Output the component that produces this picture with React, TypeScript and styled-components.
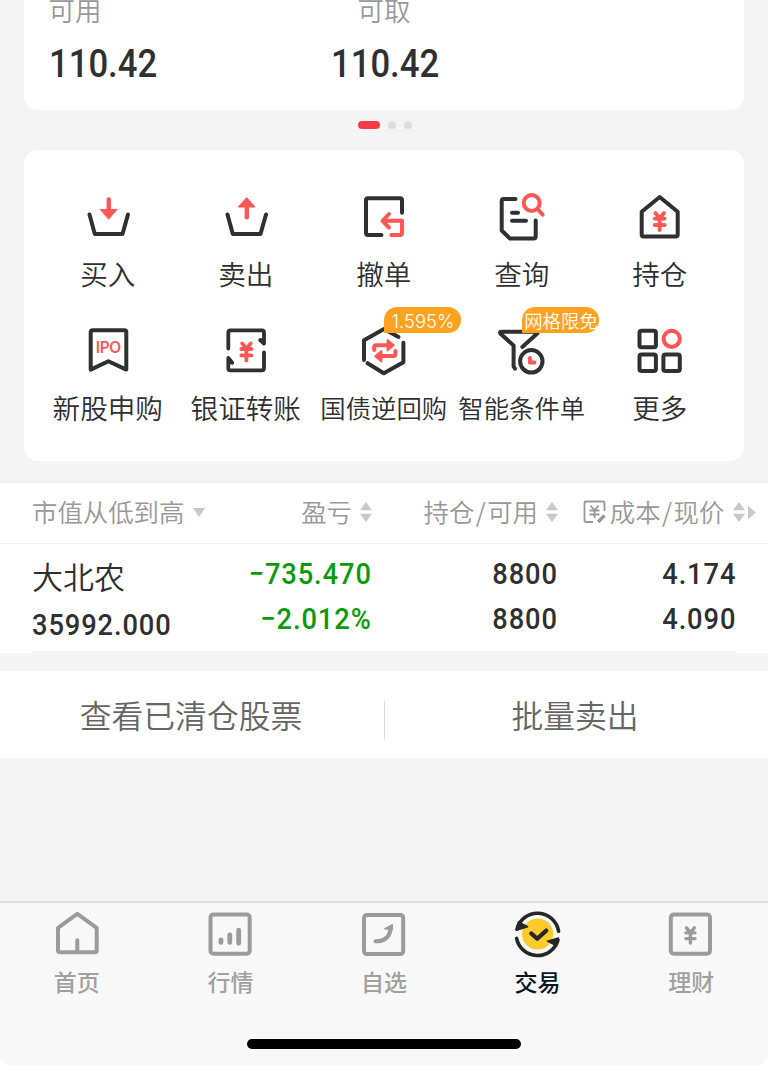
import React from 'react';
import styled, { createGlobalStyle } from 'styled-components';

const INK = '#2f3031';
const RED = '#ff5656';
const GREY = '#9b9b9b';

const GlobalStyle = createGlobalStyle`
  * { box-sizing: border-box; }
  body {
    margin: 0;
    background: #fff;
    font-family: 'Noto Sans CJK SC', sans-serif;
    font-weight: 350;
    color: ${INK};
  }
`;

const Screen = styled.div`
  width: 768px;
  height: 1065px;
  background: #f4f4f4;
  border-radius: 0 0 12px 12px;
  overflow: hidden;
  display: flex;
  flex-direction: column;
`;

const Num = styled.span<{ $size?: number; $color?: string; $spacing?: number; $right?: boolean }>`
  font-family: Roboto, sans-serif;
  font-weight: 500;
  font-size: ${p => p.$size ?? 30.3}px;
  line-height: 1;
  letter-spacing: ${p => p.$spacing ?? 1}px;
  margin-right: ${p => (p.$right ? 0 : -(p.$spacing ?? 1))}px;
  color: ${p => p.$color ?? INK};
  white-space: nowrap;
  transform: scaleX(0.9);
  transform-origin: ${p => (p.$right ? 'right' : 'left')} center;
`;

const Balance = styled.section`
  height: 110px;
  flex: none;
  margin: 0 24px;
  padding: 0 25px;
  background: #fff;
  border-radius: 0 0 14px 14px;
  display: flex;
`;

const BalanceItem = styled.div<{ $width: number; $indent: number }>`
  width: ${p => p.$width}px;
  display: flex;
  flex-direction: column;
  & > small {
    font-size: 26.5px;
    line-height: 40px;
    height: 40px;
    margin: -10px 0 15px ${p => p.$indent - 0.5}px;
    color: #999;
  }
`;

const Pager = styled.div`
  height: 40px;
  flex: none;
  display: flex;
  justify-content: center;
  padding: 11px 0 0 1px;
  gap: 8px;
`;

const Dot = styled.i<{ $active?: boolean }>`
  width: ${p => (p.$active ? 22 : 8)}px;
  height: 8px;
  border-radius: 4px;
  background: ${p => (p.$active ? '#f53b48' : '#dddddd')};
`;

const Actions = styled.section`
  height: 311px;
  flex: none;
  margin: 0 24px;
  padding: 40px 15px 0;
  background: #fff;
  border-radius: 14px;
  display: grid;
  grid-template-columns: repeat(5, 138px);
  grid-auto-rows: 134px;
`;

const Action = styled.div<{ $small?: boolean }>`
  position: relative;
  display: flex;
  flex-direction: column;
  align-items: center;
  & > svg { width: 56px; height: 56px; flex: none; }
  & > span {
    margin: 7px 0.5px 0 0;
    font-size: ${p => (p.$small ? 25.4 : 27.6)}px;
    line-height: 40px;
    white-space: nowrap;
  }
`;

const Badge = styled.b`
  position: absolute;
  left: 69px;
  top: -17px;
  width: 77px;
  height: 26px;
  padding-left: 1px;
  border-radius: 13px 13px 13px 1px;
  background: #ffa21f;
  color: #fff;
  font: 350 18.4px/28px Inter, 'Noto Sans CJK SC', sans-serif;
  text-align: center;
  white-space: nowrap;
`;

const Table = styled.section`
  margin-top: 21px;
  flex: none;
  background: #fff;
  border-top: 1px solid #ececec;
`;

const Line = styled.div`
  display: grid;
  grid-template-columns: 172px 168px 186px 1fr;
`;

const HeadLine = styled(Line)`
  height: 61px;
  padding: 0 12px 0 32px;
  border-bottom: 1px solid #f0f0f0;
  color: #999;
  font-size: 25.4px;
`;

const HeadCell = styled.div<{ $left?: boolean; $gap?: number }>`
  display: flex;
  align-items: center;
  justify-content: ${p => (p.$left ? 'flex-start' : 'flex-end')};
  gap: ${p => p.$gap ?? 8}px;
  white-space: nowrap;
  & > svg { flex: none; margin-bottom: 2px; }
  & > span { padding-bottom: 5px; }
`;

const Slash = styled.em`
  font-style: normal;
  padding: 0 1.5px;
`;

const BodyLine = styled(Line)`
  height: 109px;
  padding: 0 32px;
  background: linear-gradient(#f4f4f4, #f4f4f4) 32px 107px / 704px 2px no-repeat;
`;

const Cell = styled.div<{ $left?: boolean }>`
  display: flex;
  flex-direction: column;
  align-items: ${p => (p.$left ? 'flex-start' : 'flex-end')};
  padding-top: ${p => (p.$left ? 9 : 15)}px;
  gap: ${p => (p.$left ? 11 : 15)}px;
`;

const StockName = styled.span`
  font-size: 31px;
  line-height: 46px;
  height: 46px;
`;

const Links = styled.section`
  margin-top: 18px;
  flex: none;
  height: 87px;
  background: #fff;
  display: flex;
  align-items: center;
  & > a {
    flex: 1;
    text-align: center;
    font-size: 31.8px;
    line-height: 46px;
    padding: 0 2px 1px 0;
    color: #666;
  }
`;

const Divider = styled.i`
  width: 1px;
  height: 39px;
  margin: 12px -1px 0 0;
  background: #dcdcdc;
`;

const TabBar = styled.nav`
  margin-top: auto;
  height: 164px;
  flex: none;
  background: #f8f8f8;
  border-top: 2px solid #dedede;
  display: flex;
  flex-direction: column;
  align-items: center;
`;

const Tabs = styled.div`
  width: 768px;
  height: 136px;
  padding-top: 7px;
  display: grid;
  grid-template-columns: repeat(5, 1fr);
`;

const Tab = styled.div<{ $active?: boolean }>`
  display: flex;
  flex-direction: column;
  align-items: center;
  color: ${p => (p.$active ? '#0b1526' : '#a0a0a0')};
  font-size: 23px;
  font-weight: 500;
  line-height: 34px;
  & > svg { width: 48px; height: 48px; margin-bottom: 6px; }
`;

const HomeIndicator = styled.i`
  width: 274px;
  height: 10px;
  border-radius: 5px;
  background: #000;
`;

type GlyphProps = { size?: number; width?: number; color?: string; children: React.ReactNode };
const Glyph = ({ size = 56, width = 4, color = INK, children }: GlyphProps) => (
  <svg viewBox={`0 0 ${size} ${size}`} fill="none" stroke={color} strokeWidth={width} strokeLinecap="round" strokeLinejoin="round">
    {children}
  </svg>
);

const Yen = ({ x, y, s = 1, color = RED, width = 3.8 }: { x: number; y: number; s?: number; color?: string; width?: number }) => (
  <path
    transform={`translate(${x} ${y}) scale(${s})`}
    stroke={color}
    strokeWidth={width}
    d="M-4.3 0 0 5.3 4.3 0M-5 5.6H5M-5 12H5M0 5.5V17"
  />
);

const Sorter = () => (
  <svg width="12" height="20" viewBox="0 0 12 20" fill="#c8c8c8">
    <path d="M6 0 12 8.3H0ZM6 20 0 11.7H12Z" />
  </svg>
);

const actions: { label: string; badge?: string; small?: boolean; icon: React.ReactNode }[] = [
  {
    label: '买入',
    icon: (
      <Glyph>
        <path d="M9.5 24.5 14.8 44H42.5L48 24.5" />
        <path d="M28.8 9.5V20" stroke={RED} strokeWidth="4.4" />
        <path d="M20.6 19.5H37L28.8 29Z" stroke={RED} fill={RED} strokeWidth="1" />
      </Glyph>
    ),
  },
  {
    label: '卖出',
    icon: (
      <Glyph>
        <path d="M9.5 24.5 14.8 44H42.5L48 24.5" />
        <path d="M28.8 17V27.2" stroke={RED} strokeWidth="4.4" />
        <path d="M20.6 17H37L28.8 7.8Z" stroke={RED} fill={RED} strokeWidth="1" />
      </Glyph>
    ),
  },
  {
    label: '撤单',
    icon: (
      <Glyph>
        <path d="M46 22.8V10.3Q46 8.3 44 8.3H12Q10 8.3 10 10.3V43Q10 45 12 45H25.5" />
        <path stroke={RED} d="M33 24 26.6 30.8 33 37.6M27 30.8H46V43Q46 45 44 45H35.3" />
      </Glyph>
    ),
  },
  {
    label: '查询',
    icon: (
      <Glyph>
        <path d="M21.5 9H9.7Q7.7 9 7.7 11V40.5L16 48.6H39.7Q41.7 48.6 41.7 46.6V30.5M18 22.7H24M18 30.7H32" />
        <circle cx="37.7" cy="13" r="8" stroke={RED} />
        <path d="M43.5 19 48.6 24.7" stroke={RED} />
      </Glyph>
    ),
  },
  {
    label: '持仓',
    icon: (
      <Glyph>
        <path d="M27.7 7 9.7 21.7V44.6Q9.7 46.6 11.7 46.6H43.7Q45.7 46.6 45.7 44.6V21.7Z" />
        <Yen x={27.7} y={23} />
      </Glyph>
    ),
  },
  {
    label: '新股申购',
    icon: (
      <Glyph>
        <path d="M10.7 8Q10.7 6.2 12.7 6.2H44.3Q46.3 6.2 46.3 8V45.6L28.4 37.2 10.7 45.6Z" />
        <text x="28.4" y="29.4" textAnchor="middle" textLength="25.5" fill={RED} stroke="none" fontFamily="Inter, sans-serif" fontWeight="600" fontSize="15.4">IPO</text>
      </Glyph>
    ),
  },
  {
    label: '银证转账',
    icon: (
      <Glyph>
        <path d="M10.3 24.5V8.3Q10.3 6.3 12.3 6.3H44Q46 6.3 46 8.3V19.5L42.2 16M46 28.4V44.3Q46 46.3 44 46.3H12.3Q10.3 46.3 10.3 44.3V34L14.2 38.8" strokeWidth="3.8" />
        <path d="M10.3 33 15 39.5H10.3ZM46 20.5 41.8 15.5 46 15Z" fill={INK} strokeWidth="1.5" />
        <Yen x={28.4} y={19.4} />
      </Glyph>
    ),
  },
  {
    label: '国债逆回购',
    badge: '1.595%',
    small: true,
    icon: (
      <Glyph>
        <path d="M8 36V16.3L28 5 42.5 13M47.4 18.8V38.3L27.8 49.2 11.6 39.2" />
        <path stroke={RED} d="M18.2 26V23Q18.2 21.2 20 21.2H33M39.4 27V30Q39.4 32 37.5 32H24" />
        <path d="M31.5 16V26.4L37.8 21.2ZM25.5 27V37.5L19.2 32.2Z" stroke={RED} fill={RED} strokeWidth="1.8" />
      </Glyph>
    ),
  },
  {
    label: '智能条件单',
    badge: '网格限免',
    small: true,
    icon: (
      <Glyph>
        <path d="M43.5 7.7H7.5Q5 8 6.6 9.7L19.6 21.5V42.5L21 44.6M43.5 9.2 28.3 23" />
        <circle cx="37.3" cy="37.3" r="11.2" />
        <path d="M35.9 34V38.6H40.5" stroke={RED} />
      </Glyph>
    ),
  },
  {
    label: '更多',
    icon: (
      <Glyph>
        <rect x="7.5" y="6.8" width="16.4" height="16.4" rx="2" />
        <rect x="7.5" y="30.5" width="16.4" height="16.4" rx="2" />
        <rect x="31.4" y="30.5" width="16.4" height="16.4" rx="2" />
        <circle cx="39.7" cy="14.8" r="8.1" stroke={RED} />
      </Glyph>
    ),
  },
];

const tabs: { label: string; active?: boolean; icon: React.ReactNode }[] = [
  {
    label: '首页',
    icon: (
      <Glyph size={48} color={GREY}>
        <path d="M24.3 3.8 5 17.8V40.2Q5 42.2 7 42.2H41.7Q43.7 42.2 43.7 40.2V17.8ZM24.3 30.3V42" />
      </Glyph>
    ),
  },
  {
    label: '行情',
    icon: (
      <Glyph size={48} color={GREY}>
        <rect x="4.5" y="4.6" width="39.2" height="39.2" rx="3" />
        <path strokeWidth="4.8" d="M15 30V32.4M23.8 25V32.4M32.7 20.2V33.2" />
      </Glyph>
    ),
  },
  {
    label: '自选',
    icon: (
      <Glyph size={48} color={GREY}>
        <rect x="4" y="4.9" width="39.2" height="39.2" rx="3" />
        <path d="M15.5 31.3C24.5 31.3 30 27.5 30.8 17.5" />
        <path d="M24.6 18.6 32.4 14.4V20L29 19.5Z" fill={GREY} strokeWidth="1" />
      </Glyph>
    ),
  },
  {
    label: '交易',
    active: true,
    icon: (
      <Glyph size={48} color="#262626">
        <circle cx="23.6" cy="24" r="15.6" fill="#ffcb2b" stroke="none" />
        <path d="M17.2 23.4 23.2 28.8 32.2 20.6" strokeWidth="4.2" />
        <path strokeWidth="3.6" d="M3 19A21.3 21.3 0 0 1 44.6 21.2M2.6 28.4A21.3 21.3 0 0 0 44 30" />
        <path d="M2.4 20.3 4.4 12 13.6 16.7ZM44.4 28 42.6 35.8 33.4 31.2Z" fill="#262626" strokeWidth="1.5" />
      </Glyph>
    ),
  },
  {
    label: '理财',
    icon: (
      <Glyph size={48} color={GREY}>
        <rect x="3.8" y="4.6" width="39.2" height="39.2" rx="3" />
        <Yen x={23.4} y={17.8} s={0.9} color={GREY} />
      </Glyph>
    ),
  },
];

export default function App() {
  return (
    <>
      <GlobalStyle />
      <Screen>
        <Balance>
          <BalanceItem $width={282} $indent={0}>
            <small>可用</small>
            <Num $size={38.5} $spacing={0}>110.42</Num>
          </BalanceItem>
          <BalanceItem $width={282} $indent={27}>
            <small>可取</small>
            <Num $size={38.5} $spacing={0}>110.42</Num>
          </BalanceItem>
        </Balance>
        <Pager>
          <Dot $active />
          <Dot />
          <Dot />
        </Pager>
        <Actions>
          {actions.map(a => (
            <Action key={a.label} $small={a.small}>
              {a.icon}
              {a.badge && <Badge>{a.badge}</Badge>}
              <span>{a.label}</span>
            </Action>
          ))}
        </Actions>
        <Table>
          <HeadLine>
            <HeadCell $left $gap={9}>
              <span>市值从低到高</span>
              <svg width="12" height="9" viewBox="0 0 12 9" fill="#c8c8c8"><path d="M0 0H12L6 9Z" /></svg>
            </HeadCell>
            <HeadCell><span>盈亏</span><Sorter /></HeadCell>
            <HeadCell><span>持仓<Slash>/</Slash>可用</span><Sorter /></HeadCell>
            <HeadCell $gap={3}>
              <svg width="24" height="24" viewBox="0 0 24 24" fill="none" stroke="#999" strokeWidth="1.8">
                <path d="M10 22H3Q1.5 22 1.5 20.5V3Q1.5 1.5 3 1.5H20Q21.5 1.5 21.5 3V11M7.3 5.5 11.5 10 15.7 5.5M6.5 10.5H16.5M6.5 14.5H16.5M11.5 10V18" />
                <path d="M15 22 21.5 15.5" strokeWidth="3.4" />
              </svg>
              <span>成本<Slash>/</Slash>现价&nbsp;</span>
              <Sorter />
              <svg width="8" height="13" viewBox="0 0 8 13" fill="#c8c8c8"><path d="M0 0 8 6.5 0 13Z" /></svg>
            </HeadCell>
          </HeadLine>
          <BodyLine>
            <Cell $left>
              <StockName>大北农</StockName>
              <Num>35992.000</Num>
            </Cell>
            <Cell>
              <Num $right $color="#0a9b0a">−735.470</Num>
              <Num $right $color="#0a9b0a">−2.012%</Num>
            </Cell>
            <Cell>
              <Num $right>8800</Num>
              <Num $right>8800</Num>
            </Cell>
            <Cell>
              <Num $right>4.174</Num>
              <Num $right>4.090</Num>
            </Cell>
          </BodyLine>
        </Table>
        <Links>
          <a>查看已清仓股票</a>
          <Divider />
          <a>批量卖出</a>
        </Links>
        <TabBar>
          <Tabs>
            {tabs.map(t => (
              <Tab key={t.label} $active={t.active}>
                {t.icon}
                {t.label}
              </Tab>
            ))}
          </Tabs>
          <HomeIndicator />
        </TabBar>
      </Screen>
    </>
  );
}
